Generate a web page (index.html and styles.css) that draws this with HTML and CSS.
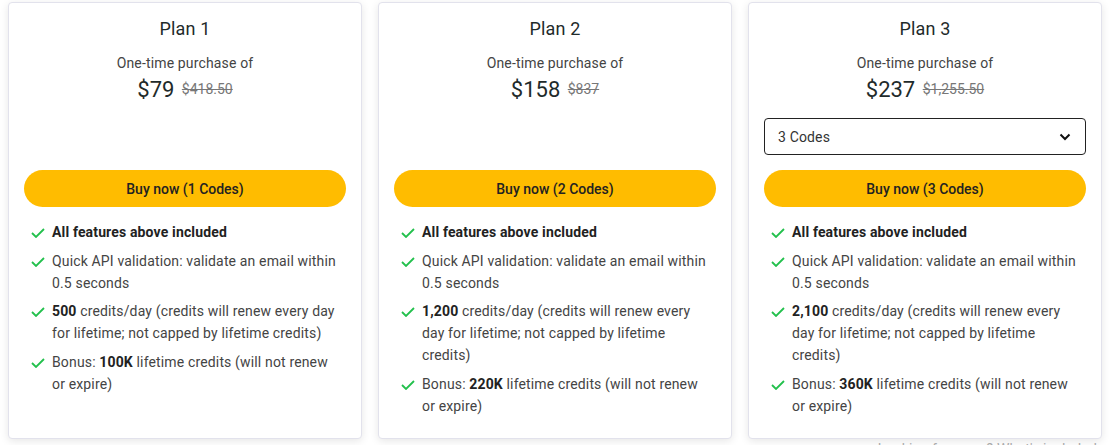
FILE: index.html
```html
<!DOCTYPE html>
<html lang="en">
<head>
    <meta charset="UTF-8">
    <meta name="viewport" content="width=device-width, initial-scale=1.0">
    <title>Plans</title>
    <link rel="stylesheet" href="styles.css">
</head>
<body>
    <div class="plans">
        <div class="plan-card">
            <div class="plan-title">Plan 1</div>
            <div class="plan-sub">One-time purchase of</div>
            <div class="plan-price">$79 <span class="old-price">$418.50</span></div>
            <div class="code-select hidden">1 Codes</div>
            <button class="buy-btn">Buy now (1 Codes)</button>
            <ul class="features">
                <li><svg class="check" viewBox="0 0 14 10"><path d="M1 5l4 4 8-8"/></svg><span><b>All features above included</b></span></li>
                <li><svg class="check" viewBox="0 0 14 10"><path d="M1 5l4 4 8-8"/></svg><span>Quick API validation: validate an email within 0.5 seconds</span></li>
                <li><svg class="check" viewBox="0 0 14 10"><path d="M1 5l4 4 8-8"/></svg><span><b>500</b> credits/day (credits will renew every day for lifetime; not capped by lifetime credits)</span></li>
                <li><svg class="check" viewBox="0 0 14 10"><path d="M1 5l4 4 8-8"/></svg><span>Bonus: <b>100K</b> lifetime credits (will not renew or expire)</span></li>
            </ul>
        </div>
        <div class="plan-card">
            <div class="plan-title">Plan 2</div>
            <div class="plan-sub">One-time purchase of</div>
            <div class="plan-price">$158 <span class="old-price">$837</span></div>
            <div class="code-select hidden">2 Codes</div>
            <button class="buy-btn">Buy now (2 Codes)</button>
            <ul class="features">
                <li><svg class="check" viewBox="0 0 14 10"><path d="M1 5l4 4 8-8"/></svg><span><b>All features above included</b></span></li>
                <li><svg class="check" viewBox="0 0 14 10"><path d="M1 5l4 4 8-8"/></svg><span>Quick API validation: validate an email within 0.5 seconds</span></li>
                <li><svg class="check" viewBox="0 0 14 10"><path d="M1 5l4 4 8-8"/></svg><span><b>1,200</b> credits/day (credits will renew every day for lifetime; not capped by lifetime credits)</span></li>
                <li><svg class="check" viewBox="0 0 14 10"><path d="M1 5l4 4 8-8"/></svg><span>Bonus: <b>220K</b> lifetime credits (will not renew or expire)</span></li>
            </ul>
        </div>
        <div class="plan-card">
            <div class="plan-title">Plan 3</div>
            <div class="plan-sub">One-time purchase of</div>
            <div class="plan-price">$237 <span class="old-price">$1,255.50</span></div>
            <div class="code-select">
                <span>3 Codes</span>
                <svg class="chevron" viewBox="0 0 12 8"><path d="M1.5 1.5l4.5 4.5 4.5-4.5"/></svg>
            </div>
            <button class="buy-btn">Buy now (3 Codes)</button>
            <ul class="features">
                <li><svg class="check" viewBox="0 0 14 10"><path d="M1 5l4 4 8-8"/></svg><span><b>All features above included</b></span></li>
                <li><svg class="check" viewBox="0 0 14 10"><path d="M1 5l4 4 8-8"/></svg><span>Quick API validation: validate an email within 0.5 seconds</span></li>
                <li><svg class="check" viewBox="0 0 14 10"><path d="M1 5l4 4 8-8"/></svg><span><b>2,100</b> credits/day (credits will renew every day for lifetime; not capped by lifetime credits)</span></li>
                <li><svg class="check" viewBox="0 0 14 10"><path d="M1 5l4 4 8-8"/></svg><span>Bonus: <b>360K</b> lifetime credits (will not renew or expire)</span></li>
            </ul>
        </div>
    </div>
    <div class="footnote">Looking for more? What's included</div>
</body>
</html>
```

FILE: styles.css
```css
body {
    font-family: Roboto, "Noto Sans", Arial, sans-serif;
    background-color: #ffffff;
    margin: 0;
    padding: 2px 7px 0 8px;
    height: 445px;
    overflow: hidden;
    box-sizing: border-box;
    color: #444;
    letter-spacing: 0.15px;
}
.plans {
    display: grid;
    grid-template-columns: repeat(3, 1fr);
    gap: 16px;
}
.plan-card {
    background-color: white;
    border: 1px solid #e2e2ec;
    border-radius: 4px;
    box-shadow: 0 2px 8px rgba(0, 0, 0, 0.1);
    padding: 14px 15px 21px;
    display: flex;
    flex-direction: column;
    text-align: center;
}
.plan-title {
    font-size: 18px;
    line-height: 24px;
    font-weight: 400;
    color: #1f2b2b;
}
.plan-sub {
    font-size: 14px;
    line-height: 20px;
    margin-top: 12px;
    color: #444;
}
.plan-price {
    font-size: 22px;
    line-height: 28px;
    margin-top: 2px;
    color: #1f2b2b;
    letter-spacing: 0;
}
.old-price {
    font-size: 14px;
    color: #777;
    text-decoration: line-through;
    vertical-align: 3px;
    margin-left: 2px;
}
.code-select {
    margin-top: 14px;
    height: 37px;
    box-sizing: border-box;
    border: 1px solid #222;
    border-radius: 4px;
    padding: 0 14px 0 13px;
    display: flex;
    align-items: center;
    justify-content: space-between;
    font-size: 14px;
    color: #333;
}
.code-select.hidden {
    visibility: hidden;
}
.chevron {
    width: 12px;
    height: 8px;
    fill: none;
    stroke: #111;
    stroke-width: 2;
}
.buy-btn {
    margin-top: 15px;
    height: 37px;
    border: none;
    border-radius: 19px;
    background-color: #ffbc00;
    color: #222;
    font-family: inherit;
    font-size: 14px;
    font-weight: 500;
    letter-spacing: 0;
    cursor: pointer;
}
.features {
    list-style: none;
    margin: 14px 0 0;
    padding: 0 5px 0 7px;
    text-align: left;
}
.features li {
    display: flex;
    gap: 7px;
    font-size: 14px;
    line-height: 22px;
    margin-bottom: 6.5px;
}
.features li:last-child {
    margin-bottom: 0;
}
.features b {
    color: #222;
    font-weight: 700;
}
.check {
    flex: none;
    width: 14px;
    height: 10px;
    margin-top: 7px;
    fill: none;
    stroke: #22c04c;
    stroke-width: 1.8;
}
.footnote {
    text-align: right;
    font-size: 14px;
    line-height: 16px;
    color: #aaa;
    margin-top: 2px;
    padding-right: 5px;
}
```
